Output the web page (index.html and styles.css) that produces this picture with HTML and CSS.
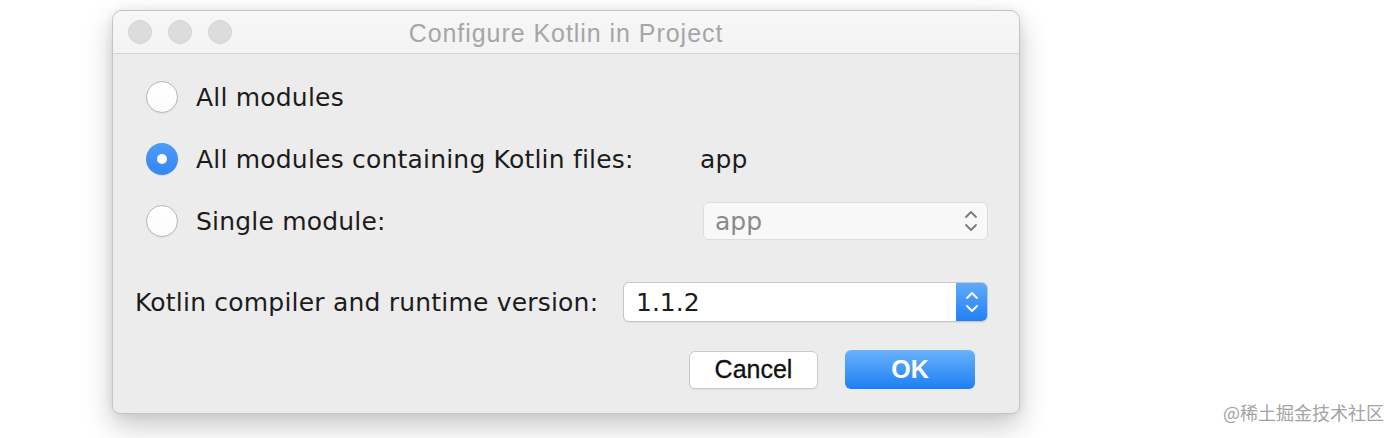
FILE: index.html
```html
<!DOCTYPE html>
<html>
<head>
<meta charset="utf-8">
<title>Configure Kotlin in Project</title>
<link rel="stylesheet" href="styles.css">
</head>
<body>
<div class="window">
  <div class="titlebar">
    <div class="lights">
      <span class="light"></span>
      <span class="light"></span>
      <span class="light"></span>
    </div>
    <div class="title">Configure Kotlin in Project</div>
    <div></div>
  </div>
  <div class="content">
    <div class="radios">
      <div class="row">
        <div class="opt"><span class="radio"></span><span class="label">All modules</span></div>
      </div>
      <div class="row">
        <div class="opt"><span class="radio checked"></span><span class="label">All modules containing Kotlin files:</span></div>
        <div class="value">app</div>
      </div>
      <div class="row">
        <div class="opt"><span class="radio"></span><span class="label">Single module:</span></div>
        <div class="select disabled">
          <span class="sel-text">app</span>
          <svg class="updown" width="14" height="22" viewBox="0 0 14 22"><polyline points="2,7 7,2 12,7" fill="none" stroke="#7a7a7a" stroke-width="1.8" stroke-linecap="round" stroke-linejoin="round"/><polyline points="2,15 7,20 12,15" fill="none" stroke="#7a7a7a" stroke-width="1.8" stroke-linecap="round" stroke-linejoin="round"/></svg>
        </div>
      </div>
    </div>
    <div class="version-row">
      <span class="label">Kotlin compiler and runtime version:</span>
      <div class="combo">
        <span class="combo-text">1.1.2</span>
        <span class="stepper">
          <svg width="14" height="24" viewBox="0 0 14 24"><polyline points="2,8 7,3 12,8" fill="none" stroke="#fff" stroke-width="2" stroke-linecap="round" stroke-linejoin="round"/><polyline points="2,16 7,21 12,16" fill="none" stroke="#fff" stroke-width="2" stroke-linecap="round" stroke-linejoin="round"/></svg>
        </span>
      </div>
    </div>
    <div class="buttons">
      <button class="btn cancel">Cancel</button>
      <button class="btn ok">OK</button>
    </div>
  </div>
</div>
<div class="watermark">@稀土掘金技术社区</div>
</body>
</html>
```

FILE: styles.css
```css
html, body {
  margin: 0;
  padding: 0;
  background: #ffffff;
}
body {
  width: 1400px;
  height: 438px;
  overflow: hidden;
  position: relative;
  font-family: "DejaVu Sans", sans-serif;
}
.window {
  margin: 10px 0 0 112px;
  width: 908px;
  height: 404px;
  box-sizing: border-box;
  border: 1px solid #c4c4c4;
  border-radius: 10px 10px 8px 8px;
  background: #ececec;
  box-shadow: 0 12px 28px rgba(0, 0, 0, 0.22), 0 0 10px rgba(0, 0, 0, 0.07);
  overflow: hidden;
  display: flex;
  flex-direction: column;
}
.titlebar {
  height: 42px;
  flex: none;
  border-bottom: 1px solid #d3d3d3;
  background: linear-gradient(#f7f7f7, #f3f3f3);
  display: grid;
  grid-template-columns: 1fr auto 1fr;
  align-items: center;
}
.lights {
  display: flex;
  gap: 16px;
  padding-left: 15px;
}
.light {
  width: 24px;
  height: 24px;
  border-radius: 50%;
  background: #dcdcdc;
  border: 1px solid #d4d4d4;
  box-sizing: border-box;
}
.title {
  font-family: "Liberation Sans", Arial, sans-serif;
  font-size: 25px;
  letter-spacing: 0.95px;
  color: #a6a6a6;
  padding-top: 2px;
}
.content {
  padding: 24px 31px 0 22px;
  display: flex;
  flex-direction: column;
}
.radios {
  margin-left: 11px;
  display: flex;
  flex-direction: column;
  gap: 24px;
}
.row {
  height: 38px;
  display: grid;
  grid-template-columns: 557px 1fr;
  align-items: center;
}
.opt {
  display: flex;
  align-items: center;
  gap: 18px;
}
.label, .value {
  font-size: 25px;
  letter-spacing: 0.2px;
  color: #1c1c1c;
  white-space: nowrap;
}
.value {
  margin-left: -3px;
}
.radio {
  width: 32px;
  height: 32px;
  box-sizing: border-box;
  border-radius: 50%;
  border: 1px solid #b8b8b8;
  background: linear-gradient(#ffffff, #fbfbfb);
  box-shadow: 0 1px 1px rgba(0, 0, 0, 0.06);
  flex: none;
  display: flex;
  align-items: center;
  justify-content: center;
}
.radio.checked {
  border: none;
  background: linear-gradient(#4d9cf8, #3386f4);
}
.radio.checked::after {
  content: "";
  width: 10px;
  height: 10px;
  border-radius: 50%;
  background: #ffffff;
}
.select {
  height: 38px;
  box-sizing: border-box;
  border: 1px solid #dddddd;
  border-radius: 6px;
  background: #f8f8f8;
  display: flex;
  align-items: center;
  justify-content: space-between;
  padding: 0 9px 0 11px;
}
.sel-text {
  font-size: 25px;
  color: #8a8a8a;
}
.version-row {
  margin-top: 42px;
  height: 40px;
  display: flex;
  align-items: center;
  justify-content: space-between;
}
.combo {
  width: 365px;
  height: 40px;
  box-sizing: border-box;
  border: 1px solid #c6c6c6;
  border-radius: 6px;
  background: #ffffff;
  display: flex;
  align-items: center;
  overflow: hidden;
  box-shadow: 0 1px 1px rgba(0, 0, 0, 0.05);
}
.combo-text {
  flex: 1;
  font-size: 25px;
  color: #1c1c1c;
  padding-left: 12px;
}
.stepper {
  width: 32px;
  height: 40px;
  margin: -1px -1px -1px 0;
  background: linear-gradient(#62abfb, #1e7ff5);
  display: flex;
  align-items: center;
  justify-content: center;
}
.buttons {
  margin-top: 28px;
  padding-right: 13px;
  display: flex;
  justify-content: flex-end;
  align-items: center;
  gap: 27px;
}
.btn {
  font-family: "Liberation Sans", Arial, sans-serif;
  font-size: 25px;
  border-radius: 6px;
  box-sizing: border-box;
  padding: 0;
  margin: 0;
}
.cancel {
  width: 129px;
  height: 38px;
  background: #ffffff;
  border: 1px solid #cbcbcb;
  color: #111111;
  -webkit-text-stroke: 0.3px #111111;
  box-shadow: 0 1px 1px rgba(0, 0, 0, 0.06);
}
.ok {
  width: 130px;
  height: 39px;
  border: none;
  background: linear-gradient(#6ab2fb, #1d7ff4);
  color: #ffffff;
  font-weight: bold;
}
.watermark {
  position: absolute;
  left: 1223px;
  top: 399px;
  font-family: "Noto Sans CJK SC", "Noto Sans", sans-serif;
  font-size: 18px;
  color: #a3a3a3;
  white-space: nowrap;
}
```
